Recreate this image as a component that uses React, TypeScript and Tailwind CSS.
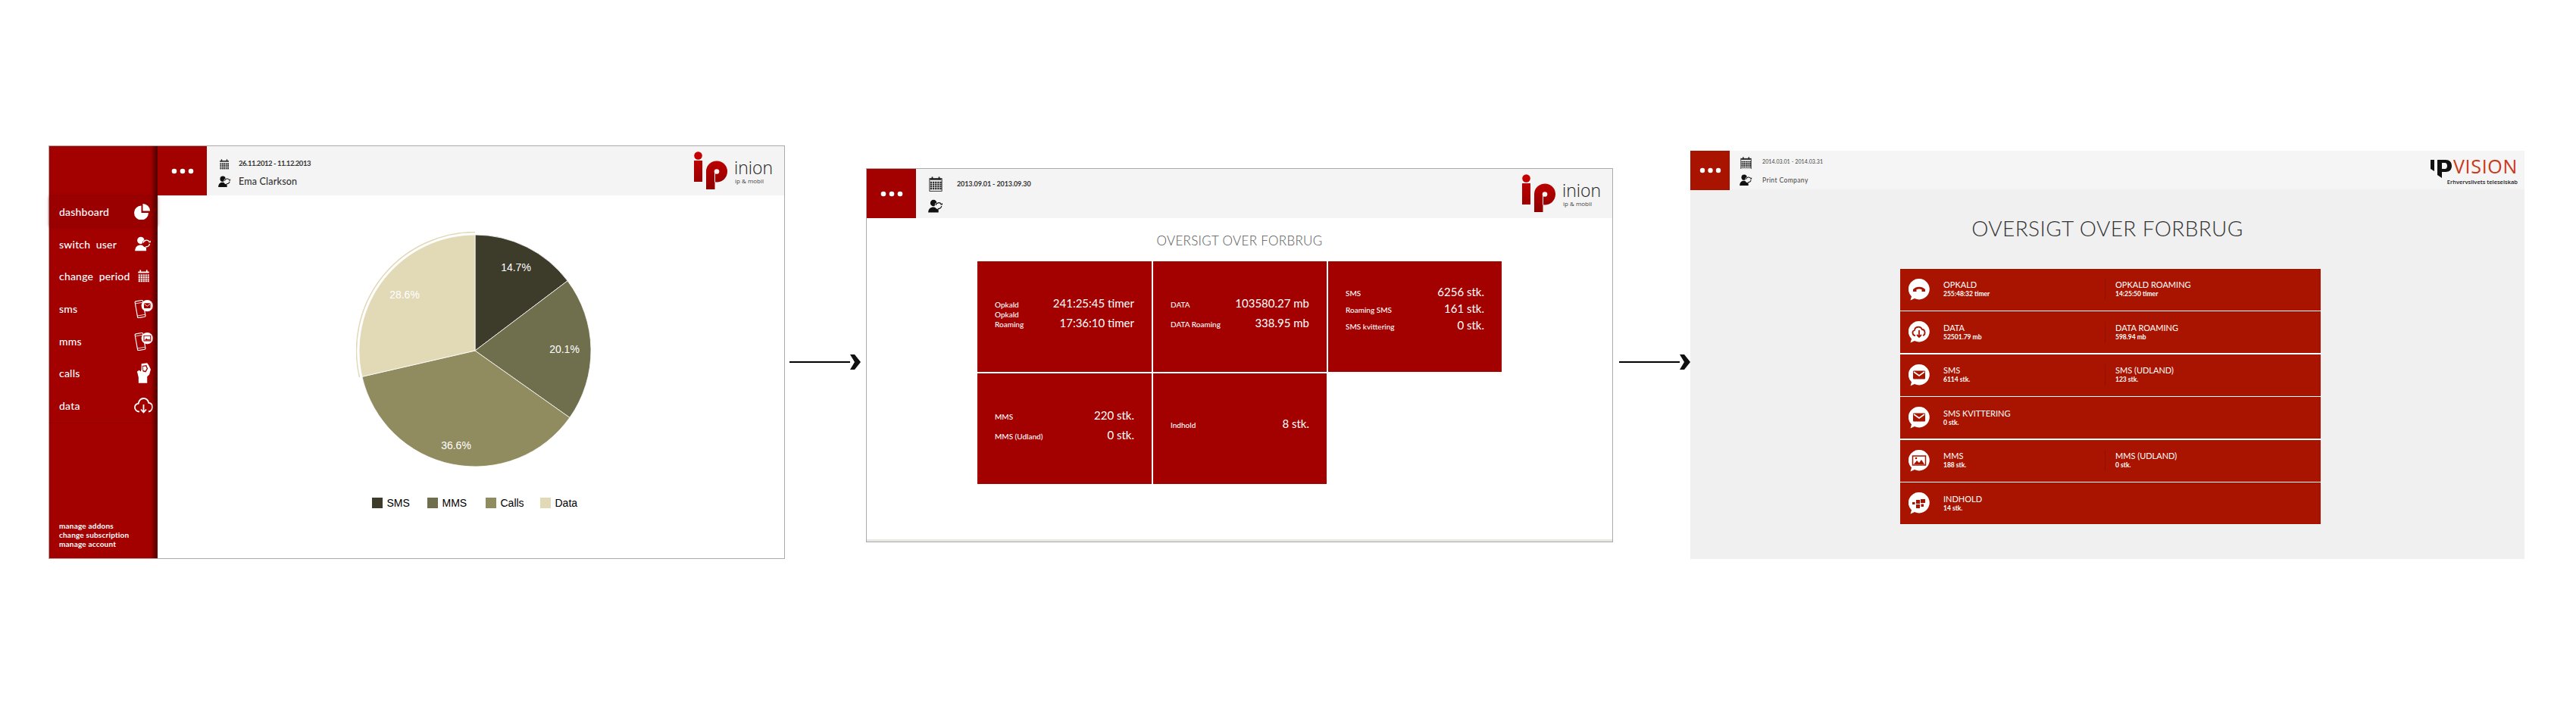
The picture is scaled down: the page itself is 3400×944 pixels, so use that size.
import React from "react";

const FONT = "font-['Lato','Open_Sans',sans-serif]";

function Dots({ className = "" }: { className?: string }) {
  return (
    <div className={`flex items-center justify-center bg-[#a30000] ${className}`}>
      <svg width="30" height="8" viewBox="0 0 30 8" fill="#fff">
        <circle cx="4" cy="4" r="3.3" />
        <circle cx="15" cy="4" r="3.3" />
        <circle cx="26" cy="4" r="3.3" />
      </svg>
    </div>
  );
}

function Calendar({ size = 18, color = "#222", light = false }: { size?: number; color?: string; light?: boolean }) {
  const cells: React.ReactNode[] = [];
  for (let r = 0; r < 4; r++)
    for (let c = 0; c < 5; c++)
      cells.push(<rect key={`${r}-${c}`} x={2 + c * 3.5} y={7.5 + r * 3.1} width="2.6" height="2.3" fill={color} />);
  return (
    <svg width={size} height={size * 1.1} viewBox="0 0 20 22">
      <rect x="4" y="0.5" width="2" height="4" fill={color} />
      <rect x="14" y="0.5" width="2" height="4" fill={color} />
      <rect x="1.5" y="3" width="17" height="2.2" fill={color} />
      {!light && <rect x="1" y="3" width="18" height="18.5" fill="none" stroke={color} strokeWidth="1" />}
      {cells}
    </svg>
  );
}

function UserSwitch({ size = 19, color = "#111", hole = "#f4f4f4" }: { size?: number; color?: string; hole?: string }) {
  return (
    <svg width={size} height={size * 0.9} viewBox="0 0 24 22">
      <circle cx="8.5" cy="6" r="5.2" fill={color} />
      <path d="M0 21.5c0-6 3.5-8.8 8.5-8.8 3.4 0 6 1 8 3.3v5.5z" fill={color} />
      <circle cx="16" cy="10.5" r="5.6" fill={hole} />
      <path d="M12 9.5a5 5 0 0 1 9-1.5M21.5 11a5 5 0 0 1-6 4.2" fill="none" stroke={color} strokeWidth="1.5" />
      <path d="M19.5 9.2h3.5v-3.2z" fill={color} />
    </svg>
  );
}

function Logo() {
  return (
    <div className="flex items-start">
      <svg width="44" height="50" viewBox="0 0 44 50">
        <defs>
          <linearGradient id="ipg" x1="0" y1="0" x2="0" y2="50" gradientUnits="userSpaceOnUse">
            <stop offset="0" stopColor="#cc0000" />
            <stop offset="1" stopColor="#8e0000" />
          </linearGradient>
        </defs>
        <circle cx="5.5" cy="5.5" r="5.3" fill="url(#ipg)" />
        <rect x="0" y="12" width="11" height="28" fill="url(#ipg)" />
        <circle cx="30" cy="26.5" r="14" fill="url(#ipg)" />
        <rect x="16" y="26" width="11.5" height="24" fill="url(#ipg)" />
        <circle cx="30" cy="26.5" r="3.3" fill="#f4f4f4" />
        <rect x="27" y="27" width="1" height="13.5" fill="#f4f4f4" />
      </svg>
      <div className="ml-[9px] mt-[7px] flex w-[52px] flex-col font-['Open_Sans',sans-serif]">
        <span className="whitespace-nowrap text-[23px] leading-[28px] font-light text-[#222]">inion</span>
        <span className="-mt-[1px] ml-[1px] whitespace-nowrap text-[8px] leading-[9px] font-medium text-[#444]">ip &amp; mobil</span>
      </div>
    </div>
  );
}

function PhoneIcon({ kind }: { kind: "sms" | "mms" }) {
  return (
    <svg width="25" height="25" viewBox="0 0 26 26" fill="none">
      <g transform="rotate(-10 9 14)" stroke="#fff" strokeWidth="1.2">
        <rect x="3" y="2" width="11" height="23" rx="1.5" />
        <path d="M3 5h11M3 22h11" strokeWidth="0.8" />
      </g>
      <circle cx="18" cy="9" r="8" fill="#fff" />
      {kind === "sms" ? (
        <g>
          <rect x="13.5" y="5.5" width="9" height="7" rx="1" fill="#a30000" />
          <path d="M14 6.5l4 3 4-3" stroke="#fff" strokeWidth="0.9" />
        </g>
      ) : (
        <g>
          <rect x="13.5" y="5.5" width="9" height="7" fill="none" stroke="#a30000" strokeWidth="1" />
          <path d="M14 12l3-3 2 2 1.5-1 2 2z" fill="#a30000" />
        </g>
      )}
    </svg>
  );
}

function HandIcon() {
  return (
    <svg width="19" height="27" viewBox="0 0 20 28" fill="#fff">
      <path d="M7 1l8-1 2 3 3 6-2 7-3 3v9H3v-8L1 12l3-2 2 2 1-3z" />
      <path d="M8 4l6-1 2 5-3 5-4-1z" fill="#a30000" />
      <path d="M9 5l4-.6 1.4 3.4-2 3.2-2.6-.6z" fill="#fff" />
    </svg>
  );
}

function CloudIcon() {
  return (
    <svg width="25" height="21" viewBox="0 0 25 21" fill="none" stroke="#fff" strokeWidth="1.8">
      <path d="M7 18.500C3.500 18.500 1 16 1 13s2-5 4.600-5.200C6.500 3.500 9.500 1 12.500 1c3.500 0 6 2.500 6.800 6 3 .2 4.700 2.500 4.700 5.300 0 3-2 5.700-5 6.200" />
      <path d="M12.500 9v10M9 15.500l3.500 4 3.500-4" />
    </svg>
  );
}

function PieIcon() {
  return (
    <svg width="21" height="21" viewBox="0 0 21 21" fill="#fff">
      <path d="M9.500 2.500V12h9.500A9.500 9.500 0 1 1 9.500 2.500z" />
      <path d="M11.500 0A9.500 9.500 0 0 1 21 9.500h-9.500z" />
    </svg>
  );
}

const nav: { label: string; icon: React.ReactNode }[] = [
  { label: "switch  user", icon: <UserSwitch size={22} color="#fff" hole="#a30000" /> },
  { label: "change  period", icon: <Calendar size={17} color="#fff" light /> },
  { label: "sms", icon: <PhoneIcon kind="sms" /> },
  { label: "mms", icon: <PhoneIcon kind="mms" /> },
  { label: "calls", icon: <HandIcon /> },
  { label: "data", icon: <CloudIcon /> },
];

function polar(r: number, pct: number) {
  const a = (pct / 100) * 2 * Math.PI;
  return [157 + r * Math.sin(a), 157 - r * Math.cos(a)];
}

function slice(from: number, to: number, r = 153) {
  const [x1, y1] = polar(r, from);
  const [x2, y2] = polar(r, to);
  const large = to - from > 50 ? 1 : 0;
  return `M157 157L${x1} ${y1}A${r} ${r} 0 ${large} 1 ${x2} ${y2}Z`;
}

function Pie() {
  const pieces = [
    { from: 0, to: 14.7, fill: "#3d3b29" },
    { from: 14.7, to: 34.8, fill: "#6f6f4d" },
    { from: 34.8, to: 71.4, fill: "#918c60" },
    { from: 71.4, to: 100, fill: "#e2d9b7" },
  ];
  const [ax, ay] = polar(156.5, 71.4);
  const [bx, by] = polar(156.5, 100);
  return (
    <svg width="314" height="314" viewBox="0 0 314 314" className="block">
      {pieces.map((p) => (
        <path key={p.fill} d={slice(p.from, p.to)} fill={p.fill} stroke="#fff" strokeWidth="0.8" />
      ))}
      <path d={`M${ax} ${ay}A156.5 156.5 0 0 1 ${bx} ${by}`} fill="none" stroke="#e2d9b7" strokeWidth="1.5" />
      <g fill="#fff" fontFamily="'Liberation Sans', sans-serif" fontSize="14" textAnchor="middle">
        <text x="211" y="52">14.7%</text>
        <text x="275" y="160">20.1%</text>
        <text x="132" y="287">36.6%</text>
        <text x="64" y="88">28.6%</text>
      </g>
    </svg>
  );
}

function Legend() {
  const items = [
    { n: "SMS", c: "#3d3b29", w: "w-[73px]" },
    { n: "MMS", c: "#6f6f4d", w: "w-[77px]" },
    { n: "Calls", c: "#918c60", w: "w-[72px]" },
    { n: "Data", c: "#e2d9b7", w: "w-[50px]" },
  ];
  return (
    <div className="flex h-[16px] items-center font-['Liberation_Sans',sans-serif] text-[14px] text-black">
      {items.map((i) => (
        <div key={i.n} className={`flex items-center gap-[6px] ${i.w}`}>
          <span className="block h-[14px] w-[14px]" style={{ backgroundColor: i.c }} />
          <span>{i.n}</span>
        </div>
      ))}
    </div>
  );
}

function ScreenOne() {
  return (
    <div className={`flex h-[546px] w-[972px] border border-[#aaaaaa] bg-white ${FONT}`}>
      <aside className="relative flex w-[143px] flex-col bg-[#a30000]">
        <div className="h-[66px]" />
        <div className="flex h-[40px] items-center justify-between bg-[#9b0000] pl-[13px] pr-[10px] shadow-[0_0_4px_rgba(90,0,0,0.5)]">
          <span className="text-[14px] font-medium tracking-[0.2px] text-white">dashboard</span>
          <PieIcon />
        </div>
        <div className="flex flex-col border-b border-[#980000] pt-[2px] pb-[1px]">
          {nav.map((n) => (
            <div key={n.label} className="flex h-[42.6px] items-center justify-between pl-[13px] pr-[6px] whitespace-pre">
              <span className="text-[14px] font-medium tracking-[0.2px] text-white">{n.label}</span>
              <span className="flex w-[26px] justify-center">{n.icon}</span>
            </div>
          ))}
        </div>
        <div className="mt-auto flex flex-col pb-[13px] pl-[13px] text-[10px] font-bold leading-[12px] tracking-[0.2px] text-white">
          <span>manage addons</span>
          <span>change subscription</span>
          <span>manage account</span>
        </div>
        <div className="pointer-events-none absolute inset-y-0 right-0 w-[9px] bg-gradient-to-r from-transparent to-[#4a0000]" />
      </aside>
      <div className="flex flex-1 flex-col">
        <header className="flex h-[65px] bg-[#f4f4f4]">
          <Dots className="h-[65px] w-[65px]" />
          <div className="flex flex-1 flex-col pl-[13px]">
            <div className="flex h-[35px] items-end gap-[9px]">
              <span className="flex w-[20px] justify-center pb-[3px]"><Calendar size={14} light color="#222" /></span>
              <span className="pb-[5px] text-[9.5px] font-bold tracking-[-0.45px] text-[#333]">26.11.2012 - 11.12.2013</span>
            </div>
            <div className="flex h-[24px] items-center gap-[9px]">
              <span className="flex w-[20px] justify-center"><UserSwitch size={17} /></span>
              <span className="text-[12.5px] font-medium tracking-[0.2px] text-[#333]">Ema Clarkson</span>
            </div>
          </div>
          <div className="pr-[14px] pt-[7px]"><Logo /></div>
        </header>
        <div className="flex flex-1 flex-col items-center pl-[10px] pt-[48px]">
          <Pie />
          <div className="mt-[36px]"><Legend /></div>
        </div>
      </div>
    </div>
  );
}

function Arrow() {
  return (
    <div className="flex h-[20px] w-[94px] items-center">
      <div className="h-[2px] w-[80px] bg-black" />
      <svg width="14" height="20" viewBox="0 0 14 20"><path d="M0 0h6l8 10-8 10H0l6-10z" fill="#111" /></svg>
    </div>
  );
}

function Cell({ rows, tight }: { rows: [string, string][]; tight?: boolean }) {
  const inner =
    rows.length === 3
      ? "gap-[4px] pb-[21px]"
      : rows.length === 1
        ? "pb-[13px]"
        : tight
          ? "pb-[9px]"
          : "gap-[8px] pb-[9px]";
  return (
    <div className="flex flex-col justify-center bg-[#a30000] px-[23px] pb-[2px] text-white">
      <div className={`flex flex-col ${inner}`}>
        {rows.map(([l, v]) => (
          <div key={l} className="flex items-end justify-between">
            <span className="w-[70px] shrink-0 text-[10px] leading-[13px] font-medium">{l}</span>
            <span className="whitespace-nowrap text-[15px] leading-[18px]">{v}</span>
          </div>
        ))}
      </div>
    </div>
  );
}

function ScreenTwo() {
  return (
    <div className={`flex h-[494px] w-[986px] flex-col border border-[#aaaaaa] bg-white ${FONT}`}>
      <header className="flex h-[65px] shrink-0 bg-[#f4f4f4]">
        <Dots className="h-[65px] w-[65px]" />
        <div className="flex flex-1 flex-col pl-[16px]">
          <div className="flex h-[38px] items-center gap-[18px] pt-[2px]">
            <span className="flex w-[20px] justify-center"><Calendar size={18} /></span>
            <span className="text-[9px] font-bold tracking-[-0.1px] text-[#333]">2013.09.01 - 2013.09.30</span>
          </div>
          <div className="flex h-[22px] items-center">
            <span className="flex w-[20px] justify-center"><UserSwitch size={20} /></span>
          </div>
        </div>
        <div className="pr-[14px] pt-[7px]"><Logo /></div>
      </header>
      <h2 className="mt-[20px] text-center text-[17px] leading-[20px] font-light tracking-[0.3px] text-[#555]">OVERSIGT OVER FORBRUG</h2>
      <div className="ml-[146px] mt-[17px] grid grid-cols-[230px_229px_229px] grid-rows-[146px_146px] gap-[2px]">
        <Cell tight rows={[["Opkald", "241:25:45 timer"], ["Opkald Roaming", "17:36:10 timer"]]} />
        <Cell rows={[["DATA", "103580.27 mb"], ["DATA Roaming", "338.95 mb"]]} />
        <Cell rows={[["SMS", "6256 stk."], ["Roaming SMS", "161 stk."], ["SMS kvittering", "0 stk."]]} />
        <Cell rows={[["MMS", "220 stk."], ["MMS (Udland)", "0 stk."]]} />
        <Cell rows={[["Indhold", "8 stk."]]} />
      </div>
      <div className="mt-auto h-[3px] bg-[#e8e8e3]" />
    </div>
  );
}

function Bubble({ kind }: { kind: string }) {
  const r = "#a81400";
  return (
    <svg width="28" height="31" viewBox="0 0 28 31">
      <path d="M14 0a13.700 13.700 0 1 1-6 26l-5.500 2.500 1.500-5A13.700 13.700 0 0 1 14 0z" fill="#fff" />
      {kind === "phone" && <path d="M6 14c4-4.500 12-4.500 16 0v3h-4.500v-2.800c-2-.8-5-.8-7 0V17H6z" fill={r} />}
      {kind === "cloud" && (
        <g fill="none" stroke={r} strokeWidth="1.800">
          <path d="M9 19c-4 0-5-6-1-7 .5-5 8-6 10-1 4 0 5 7 1 8" />
          <path d="M14 12v9M11 18l3 3 3-3" />
        </g>
      )}
      {kind === "mail" && (
        <g>
          <rect x="6" y="8.500" width="16" height="11" rx="1" fill={r} />
          <path d="M7 10l7 5 7-5" fill="none" stroke="#fff" strokeWidth="1.600" />
        </g>
      )}
      {kind === "image" && (
        <g>
          <rect x="5.500" y="8" width="17" height="12" fill="none" stroke={r} strokeWidth="1.500" />
          <path d="M7 19l4-5 3 3 3-4 4 6z" fill={r} />
          <circle cx="10" cy="11" r="1.300" fill={r} />
        </g>
      )}
      {kind === "grid" && (
        <g fill={r}>
          <rect x="5" y="13" width="3.500" height="3" />
          <rect x="10" y="10" width="5" height="5" />
          <rect x="16" y="9" width="6" height="5" />
          <rect x="10" y="16" width="5" height="5" />
          <rect x="16.500" y="15.500" width="3.500" height="3.500" />
        </g>
      )}
    </svg>
  );
}

function Stat({ t, v, className = "" }: { t: string; v: string; className?: string }) {
  return (
    <div className={`flex flex-col ${className}`}>
      <span className="text-[11px] leading-[12px]">{t}</span>
      <span className="text-[8.5px] leading-[12px] font-bold">{v}</span>
    </div>
  );
}

const rows3: { icon: string; a: [string, string]; b?: [string, string] }[] = [
  { icon: "phone", a: ["OPKALD", "255:48:32 timer"], b: ["OPKALD ROAMING", "14:25:50 timer"] },
  { icon: "cloud", a: ["DATA", "52501.79 mb"], b: ["DATA ROAMING", "598.94 mb"] },
  { icon: "mail", a: ["SMS", "6114 stk."], b: ["SMS (UDLAND)", "123 stk."] },
  { icon: "mail", a: ["SMS KVITTERING", "0 stk."] },
  { icon: "image", a: ["MMS", "188 stk."], b: ["MMS (UDLAND)", "0 stk."] },
  { icon: "grid", a: ["INDHOLD", "14 stk."] },
];

function ScreenThree() {
  return (
    <div className={`flex h-[538.5px] w-[1101px] flex-col bg-[#f0f0f0] ${FONT}`}>
      <header className="flex h-[51px] shrink-0 bg-[#f5f5f5]">
        <div className="flex h-[52px] w-[52px] items-center justify-center bg-[#a81400]">
          <svg width="29" height="8" viewBox="0 0 29 8" fill="#fff">
            <circle cx="4" cy="4" r="3.200" />
            <circle cx="14.500" cy="4" r="3.200" />
            <circle cx="25" cy="4" r="3.200" />
          </svg>
        </div>
        <div className="flex flex-1 flex-col pl-[12px]">
          <div className="flex h-[27px] items-end gap-[13px]">
            <span className="flex w-[18px] justify-center pb-[3px]"><Calendar size={15} /></span>
            <span className="pb-[8px] text-[7px] tracking-[0.1px] text-[#444]">2014.03.01 - 2014.03.31</span>
          </div>
          <div className="flex h-[24px] items-center gap-[13px]">
            <span className="flex w-[18px] justify-center"><UserSwitch size={17} /></span>
            <span className="text-[8.5px] tracking-[0.4px] text-[#444]">Print Company</span>
          </div>
        </div>
        <div className="flex flex-col items-end pr-[9px] pt-[9px] font-['Open_Sans',sans-serif]">
          <div className="flex items-start">
            <svg width="29" height="26" viewBox="0 0 29 26" className="mt-[2px]">
              <path d="M0 1h5v15l-5-3z" fill="#111" />
              <path d="M9 1h11c5 0 8 3 8 8s-3 8-8 8h-5v-4h4c2 0 3-2 3-4s-1-4-3-4h-4v20l-6-4z" fill="#111" />
            </svg>
            <span className="ml-[1px] text-[25px] leading-[22px] tracking-[0.7px] text-[#c9391a]">VISION</span>
          </div>
          <span className="-mt-[1px] text-[7.5px] leading-[10px] font-semibold text-[#222]">Erhvervslivets teleselskab</span>
        </div>
      </header>
      <h2 className="mt-[35px] text-center text-[28px] leading-[32px] font-light tracking-[0.4px] text-[#333]">OVERSIGT OVER FORBRUG</h2>
      <div className="ml-[277px] mt-[37px] flex w-[555px] flex-col gap-[1.5px] bg-white py-[0.5px] text-white">
        {rows3.map((r) => (
          <div key={r.a[0]} className="flex h-[55px] items-center bg-[#a81400] pl-[11px]">
            <span className="w-[46px] shrink-0 pt-[2px]"><Bubble kind={r.icon} /></span>
            <Stat t={r.a[0]} v={r.a[1]} className="w-[213px]" />
            {r.b && (
              <div className="border-l border-[#921000] py-[2px] pl-[13px]">
                <Stat t={r.b[0]} v={r.b[1]} />
              </div>
            )}
          </div>
        ))}
      </div>
    </div>
  );
}

export default function App() {
  return (
    <div className="flex h-[944px] w-[3400px] items-start overflow-hidden bg-white pl-[64px]">
      <div className="mt-[192px]"><ScreenOne /></div>
      <div className="ml-[6px] mt-[468px]"><Arrow /></div>
      <div className="ml-[7px] mt-[222px]"><ScreenTwo /></div>
      <div className="ml-[8px] mt-[468px]"><Arrow /></div>
      <div className="mt-[199px]"><ScreenThree /></div>
    </div>
  );
}
